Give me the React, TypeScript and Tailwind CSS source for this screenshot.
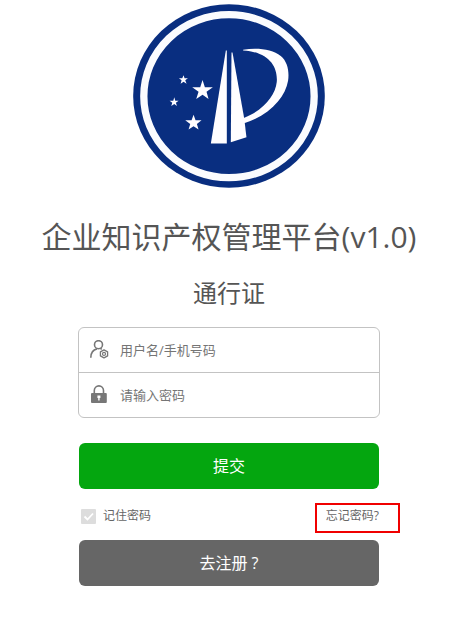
import type { ReactNode } from "react"

interface FieldProps {
  id: string
  type: string
  label: string
  icon: ReactNode
}

function Logo() {
  return (
    <svg viewBox="24 13 577 552" className="h-[184px] w-48" role="img" aria-label="企业知识产权管理平台">
      <ellipse cx="312.5" cy="289" rx="288" ry="276" fill="#092e80" />
      <ellipse cx="312.5" cy="289.5" rx="256" ry="245" fill="none" stroke="#fafbfe" strokeWidth="22" />
      <g fill="#fffdff">
        {/* Twin towers */}
        <path d="M303 152h3V432l-48 0z" />
        <path d="M320 158h3L358 355 365 413 318 428z" />
        {/* Bowl of the P */}
        <path d="M355 150C400 143 443 149 468 169C489 186 494 217 490 243C482 292 437 345 358 371L357 355C418 331 452 286 456 247C460 200 431 157 355 152z" />
        {/* Stars */}
        <path d="M233 241l7 22h24l-19 13 6 22-18-13-19 13 7-22-19-13h24z" />
        <path d="M206 345l6 17h18l-14 11 5 17-15-10-15 10 5-17-15-11h19z" />
        <path d="M176 227l3 9h10l-8 6 4 10-9-6-9 6 3-10-8-6h10z" />
        <path d="M148 293l3 10h10l-8 6 3 10-8-6-9 6 3-10-8-6h11z" />
      </g>
    </svg>
  )
}

function UserIcon() {
  return (
    <svg viewBox="0 0 20 20" className="size-5 shrink-0" fill="none" stroke="#777" aria-hidden="true">
      <circle cx="9.5" cy="4.7" r="4" strokeWidth="1.6" />
      <path d="M1.8 17.8C1.8 13 4 9.8 8 8.9M11.2 8.4l1.6.8" strokeWidth="1.6" />
      <path d="M15 9.9l3.6 2v4l-3.6 2-3.6-2v-4z" strokeWidth="1.3" strokeLinejoin="round" />
      <circle cx="15" cy="13.9" r="1.5" strokeWidth="1.2" />
    </svg>
  )
}

function LockIcon() {
  return (
    <svg viewBox="0 0 20 20" className="size-5 shrink-0" aria-hidden="true">
      <path d="M5.3 9V5.5a4.6 4.6 0 0 1 9.2 0V9" fill="none" stroke="#777" strokeWidth="1.6" />
      <rect x="2" y="8" width="15.8" height="10" rx="1" fill="#777" />
      <path d="M8.4 10.5h3v2.5h-.8v2.5H9.2V13h-.8z" fill="#fff" />
    </svg>
  )
}

function Field({ id, type, label, icon }: FieldProps) {
  return (
    <div className="box-content flex h-11">
      <div className="flex flex-1 items-center gap-[11px] px-[10px]">
        {icon}
        <input
          id={id}
          name={id}
          type={type}
          placeholder={label}
          aria-label={label}
          className="min-w-0 flex-1 bg-transparent text-[13px] leading-5 text-[#555] outline-none placeholder:text-[#757575]"
        />
      </div>
    </div>
  )
}

export default function App() {
  return (
    <main className="flex min-h-screen flex-col items-center bg-white pt-1 pr-[5px] font-['Open_Sans','Noto_Sans_CJK_SC',sans-serif] text-[#555]">
      <Logo />
      <h1 className="mt-[29px] text-center text-3xl leading-10">企业知识产权管理平台(v1.0)</h1>
      <h2 className="mt-5 text-center text-2xl leading-8">通行证</h2>

      <form className="mt-[18px] flex w-full max-w-[302px] flex-col" onSubmit={(e) => e.preventDefault()}>
        <div className="divide-y divide-[#c3c3c3] rounded-md border border-[#c3c3c3]">
          <Field id="username" type="text" label="用户名/手机号码" icon={<UserIcon />} />
          <Field id="password" type="password" label="请输入密码" icon={<LockIcon />} />
        </div>

        <div className="flex flex-col px-px">
          <button type="submit" className="mt-[25px] h-[46px] rounded-md bg-[#04a60f] text-base text-white">
            提交
          </button>

          <div className="mt-[17px] mb-[14px] flex items-center justify-between text-xs leading-5 text-[#666]">
            <label className="flex items-center gap-[7px] pl-[2px]">
              <span className="grid">
                <input
                  type="checkbox"
                  defaultChecked
                  className="peer col-start-1 row-start-1 size-[15px] appearance-none rounded-[1px] bg-[#ddd]"
                />
                <svg
                  viewBox="0 0 15 15"
                  className="pointer-events-none invisible col-start-1 row-start-1 size-[15px] peer-checked:visible"
                  fill="none"
                  stroke="#fff"
                  strokeWidth="1.8"
                  aria-hidden="true"
                >
                  <path d="M3.5 7.5l3 3 5.5-6" />
                </svg>
              </span>
              记住密码
            </label>
            <a href="#forgot" className="relative">
              忘记密码?
              {/* Highlight frame */}
              <span className="pointer-events-none absolute -top-[3px] -right-[21px] -bottom-[7px] -left-[11px] border-2 border-[#f00000]" />
            </a>
          </div>

          <button type="button" className="h-[46px] rounded-md bg-[#666] text-base text-white">
            去注册 ?
          </button>
        </div>
      </form>
    </main>
  )
}
